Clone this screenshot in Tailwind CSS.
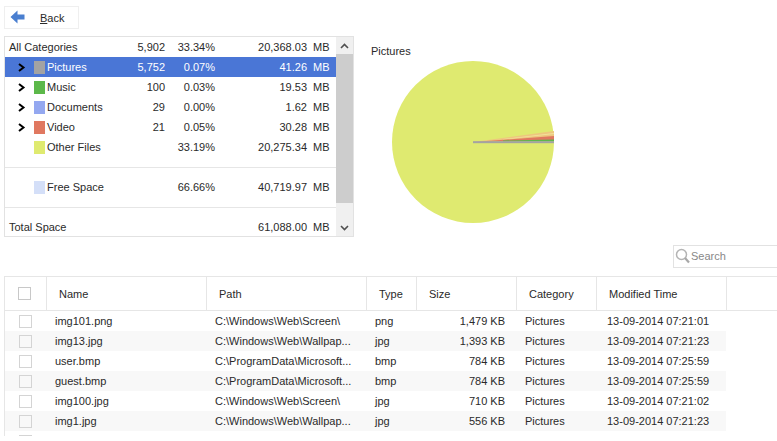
<!DOCTYPE html>
<html lang="en">
<head>
  <meta charset="UTF-8" />
  <title>Pictures</title>
  <script src="https://cdn.jsdelivr.net/npm/@tailwindcss/browser@4"></script>
</head>
<body class="bg-white text-[#2a2a2a] font-['Liberation_Sans',sans-serif] text-[11px] leading-[20px] w-[777px] h-[441px] overflow-hidden">

  <!-- Top: back, categories, chart -->
  <div class="flex h-[245px]">
    <div class="w-[355px] pl-1 pt-[6px] shrink-0">
      <button class="w-[75px] h-[23px] border border-[#efefef] bg-white flex items-center pl-[5px]">
        <svg width="15" height="15" viewBox="0 0 15 15"><path d="M7.5 0.5 L0.5 7 L7.5 13.5 V9.5 H14.5 V4.5 H7.5 Z" fill="#4a7fd0"/></svg>
        <span class="ml-[15px]"><u>B</u>ack</span>
      </button>

      <div class="mt-[7px] w-[350px] h-[201px] border border-[#e2e2e2] flex">
        <div class="w-[331px]">
          <div class="grid grid-cols-[128px_28px_50px_92px_29px] h-5 items-center pl-1">
            <span>All Categories</span><span class="text-right">5,902</span><span class="text-right">33.34%</span><span class="text-right">20,368.03</span><span class="pl-[6px]">MB</span>
          </div>
          <div class="grid grid-cols-[128px_28px_50px_92px_29px] h-5 items-center pl-1 bg-[#4a76d6] text-white">
            <span class="flex items-center"><svg class="ml-[9px] text-black" width="8" height="9" viewBox="0 0 8 9"><path d="M1 1 L5.5 4.5 L1 8" fill="none" stroke="currentColor" stroke-width="2"/></svg><span class="w-[11px] h-[13px] ml-[8px] mr-[2px] bg-[#a3a3a3]"></span>Pictures</span><span class="text-right">5,752</span><span class="text-right">0.07%</span><span class="text-right">41.26</span><span class="pl-[6px]">MB</span>
          </div>
          <div class="grid grid-cols-[128px_28px_50px_92px_29px] h-5 items-center pl-1">
            <span class="flex items-center"><svg class="ml-[9px] text-black" width="8" height="9" viewBox="0 0 8 9"><path d="M1 1 L5.5 4.5 L1 8" fill="none" stroke="currentColor" stroke-width="2"/></svg><span class="w-[11px] h-[13px] ml-[8px] mr-[2px] bg-[#5cb84a]"></span>Music</span><span class="text-right">100</span><span class="text-right">0.03%</span><span class="text-right">19.53</span><span class="pl-[6px]">MB</span>
          </div>
          <div class="grid grid-cols-[128px_28px_50px_92px_29px] h-5 items-center pl-1">
            <span class="flex items-center"><svg class="ml-[9px] text-black" width="8" height="9" viewBox="0 0 8 9"><path d="M1 1 L5.5 4.5 L1 8" fill="none" stroke="currentColor" stroke-width="2"/></svg><span class="w-[11px] h-[13px] ml-[8px] mr-[2px] bg-[#94a8f0]"></span>Documents</span><span class="text-right">29</span><span class="text-right">0.00%</span><span class="text-right">1.62</span><span class="pl-[6px]">MB</span>
          </div>
          <div class="grid grid-cols-[128px_28px_50px_92px_29px] h-5 items-center pl-1">
            <span class="flex items-center"><svg class="ml-[9px] text-black" width="8" height="9" viewBox="0 0 8 9"><path d="M1 1 L5.5 4.5 L1 8" fill="none" stroke="currentColor" stroke-width="2"/></svg><span class="w-[11px] h-[13px] ml-[8px] mr-[2px] bg-[#e07860]"></span>Video</span><span class="text-right">21</span><span class="text-right">0.05%</span><span class="text-right">30.28</span><span class="pl-[6px]">MB</span>
          </div>
          <div class="grid grid-cols-[128px_28px_50px_92px_29px] h-5 items-center pl-1">
            <span class="flex items-center"><span class="w-[11px] h-[13px] ml-[25px] mr-[2px] bg-[#dfea70]"></span>Other Files</span><span></span><span class="text-right">33.19%</span><span class="text-right">20,275.34</span><span class="pl-[6px]">MB</span>
          </div>
          <div class="h-5 flex items-center"><div class="w-full border-t border-[#e6e6e6]"></div></div>
          <div class="grid grid-cols-[128px_28px_50px_92px_29px] h-5 items-center pl-1">
            <span class="flex items-center"><span class="w-[11px] h-[13px] ml-[25px] mr-[2px] bg-[#d4dff8]"></span>Free Space</span><span></span><span class="text-right">66.66%</span><span class="text-right">40,719.97</span><span class="pl-[6px]">MB</span>
          </div>
          <div class="h-5 flex items-center"><div class="w-full border-t border-[#e6e6e6]"></div></div>
          <div class="grid grid-cols-[128px_28px_50px_92px_29px] h-5 items-center pl-1">
            <span>Total Space</span><span></span><span></span><span class="text-right">61,088.00</span><span class="pl-[6px]">MB</span>
          </div>
        </div>
        <!-- scrollbar -->
        <div class="w-[17px] bg-[#f0f0f0] flex flex-col">
          <div class="h-[17px] bg-[#f0f0f0] flex items-center justify-center">
            <svg width="9" height="6" viewBox="0 0 9 6"><path d="M1 5 L4.5 1.5 L8 5" fill="none" stroke="#505050" stroke-width="1.6"/></svg>
          </div>
          <div class="h-[149px] bg-[#cdcdcd]"></div>
          <div class="mt-auto h-[17px] flex items-center justify-center">
            <svg width="9" height="6" viewBox="0 0 9 6"><path d="M1 1 L4.5 4.5 L8 1" fill="none" stroke="#505050" stroke-width="1.6"/></svg>
          </div>
        </div>
      </div>
    </div>

    <div class="relative flex-1">
      <span class="absolute left-[16px] top-[41px]">Pictures</span>
      <svg class="absolute left-[37px] top-[61px]" width="162" height="162" viewBox="-81 -81 162 162">
        <circle r="81" fill="#dfea70"/>
        <path d="M0 0 L81 -11 L81 -5 Z" fill="#eec77e"/>
        <path d="M30 -3 L81 -9 L81 -8 L30 -2.4 Z" fill="#f2e39c"/>
        <path d="M0 0 L81 -6 L81 -1.5 Z" fill="#e07860"/>
        <path d="M30 -1.5 L81 -2.6 L81 -0.5 L30 -0.5 Z" fill="#5cb84a"/>
        <rect x="0" y="-0.8" width="81" height="2" fill="#a3a3a3"/>
      </svg>
      <!-- search -->
      <div class="absolute left-[318px] top-[245px] w-[110px] h-[23px] border border-[#e2e2e2] flex items-center pl-[1px] pb-[1px] text-[#888]">
        <svg width="15" height="16" viewBox="0 0 15 16"><circle cx="6.5" cy="6.5" r="5" fill="none" stroke="#b4b4b4" stroke-width="1.5"/><path d="M10 10 L14 14.5" stroke="#a8a8a8" stroke-width="2.2"/></svg>
        <span class="ml-[1px]">Search</span>
      </div>
    </div>
  </div>

  <!-- File table -->
  <div class="ml-1 mt-[31px] h-[160px] border-t border-l border-[#e6e6e6] overflow-hidden">
    <div class="grid grid-cols-[42px_160px_160px_50px_100px_80px_130px_1fr] h-[34px] border-b border-[#e6e6e6] items-center">
      <span class="h-full border-r border-[#e6e6e6] flex items-center pl-[13px]"><span class="w-[13px] h-[13px] border border-[#c8c8c8]"></span></span>
      <span class="h-full border-r border-[#e6e6e6] flex items-center pl-[12px]">Name</span>
      <span class="h-full border-r border-[#e6e6e6] flex items-center pl-[12px]">Path</span>
      <span class="h-full border-r border-[#e6e6e6] flex items-center pl-[12px]">Type</span>
      <span class="h-full border-r border-[#e6e6e6] flex items-center pl-[12px]">Size</span>
      <span class="h-full border-r border-[#e6e6e6] flex items-center pl-[12px]">Category</span>
      <span class="h-full border-r border-[#e6e6e6] flex items-center pl-[12px]">Modified Time</span>
      <span></span>
    </div>
    <div class="w-[721px] grid grid-cols-[50px_160px_160px_50px_80px_102px_1fr] h-5 items-center">
      <span class="pl-[14px]"><span class="block w-[13px] h-[13px] border border-[#d4d4d4]"></span></span><span>img101.png</span><span>C:\Windows\Web\Screen\</span><span>png</span><span class="text-right">1,479 KB</span><span class="pl-[20px]">Pictures</span><span>13-09-2014 07:21:01</span>
    </div>
    <div class="w-[721px] grid grid-cols-[50px_160px_160px_50px_80px_102px_1fr] h-5 items-center bg-[#f8f8f8]">
      <span class="pl-[14px]"><span class="block w-[13px] h-[13px] border border-[#d4d4d4]"></span></span><span>img13.jpg</span><span>C:\Windows\Web\Wallpap...</span><span>jpg</span><span class="text-right">1,393 KB</span><span class="pl-[20px]">Pictures</span><span>13-09-2014 07:21:23</span>
    </div>
    <div class="w-[721px] grid grid-cols-[50px_160px_160px_50px_80px_102px_1fr] h-5 items-center">
      <span class="pl-[14px]"><span class="block w-[13px] h-[13px] border border-[#d4d4d4]"></span></span><span>user.bmp</span><span>C:\ProgramData\Microsoft...</span><span>bmp</span><span class="text-right">784 KB</span><span class="pl-[20px]">Pictures</span><span>13-09-2014 07:25:59</span>
    </div>
    <div class="w-[721px] grid grid-cols-[50px_160px_160px_50px_80px_102px_1fr] h-5 items-center bg-[#f8f8f8]">
      <span class="pl-[14px]"><span class="block w-[13px] h-[13px] border border-[#d4d4d4]"></span></span><span>guest.bmp</span><span>C:\ProgramData\Microsoft...</span><span>bmp</span><span class="text-right">784 KB</span><span class="pl-[20px]">Pictures</span><span>13-09-2014 07:25:59</span>
    </div>
    <div class="w-[721px] grid grid-cols-[50px_160px_160px_50px_80px_102px_1fr] h-5 items-center">
      <span class="pl-[14px]"><span class="block w-[13px] h-[13px] border border-[#d4d4d4]"></span></span><span>img100.jpg</span><span>C:\Windows\Web\Screen\</span><span>jpg</span><span class="text-right">710 KB</span><span class="pl-[20px]">Pictures</span><span>13-09-2014 07:21:02</span>
    </div>
    <div class="w-[721px] grid grid-cols-[50px_160px_160px_50px_80px_102px_1fr] h-5 items-center bg-[#f8f8f8]">
      <span class="pl-[14px]"><span class="block w-[13px] h-[13px] border border-[#d4d4d4]"></span></span><span>img1.jpg</span><span>C:\Windows\Web\Wallpap...</span><span>jpg</span><span class="text-right">556 KB</span><span class="pl-[20px]">Pictures</span><span>13-09-2014 07:21:23</span>
    </div>
    <div class="w-[721px] h-5 pl-[14px] pt-[4px]"><span class="block w-[13px] h-[13px] border border-[#d4d4d4]"></span></div>
  </div>
</body>
</html>
